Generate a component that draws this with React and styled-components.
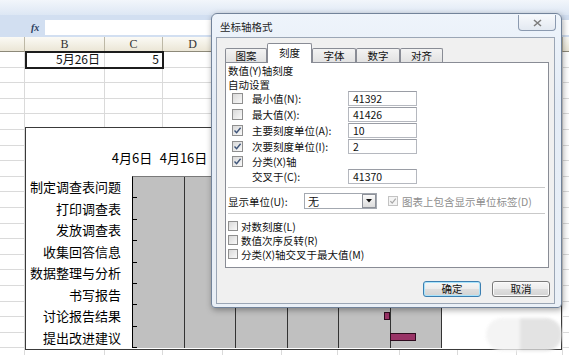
import React from 'react';
import styled, { createGlobalStyle } from 'styled-components';

const COLS = [25, 80, 58, 60, 59, 56, 62, 58, 59, 46, 30];
// letters right of D sit under the dialog
const HEAD = ['', 'B', 'C', 'D', '', '', '', '', '', '', ''];
const ROW_COUNT = 20;

const DAY = 5.15;
// only the first two axis labels are left of the dialog
const DATES = ['4月6日', '4月16日'];
const TASKS = [
  { name: '制定调查表问题', start: 22, days: 3 },
  { name: '打印调查表', start: 25, days: 2 },
  { name: '发放调查表', start: 27, days: 4 },
  { name: '收集回答信息', start: 31, days: 7 },
  { name: '数据整理与分析', start: 38, days: 6 },
  { name: '书写报告', start: 44, days: 5 },
  { name: '讨论报告结果', start: 49, days: 1 },
  { name: '提出改进建议', start: 50, days: 5 },
];

const SCALE_ROWS = [
  { label: '最小值(N):', check: 'off', value: '41392' },
  { label: '最大值(X):', check: 'off', value: '41426' },
  { label: '主要刻度单位(A):', check: 'on', value: '10' },
  { label: '次要刻度单位(I):', check: 'on', value: '2' },
  { label: '分类(X)轴', check: 'on', value: null },
  { label: '交叉于(C):', check: null, value: '41370' },
];

const OPTIONS = ['对数刻度(L)', '数值次序反转(R)', '分类(X)轴交叉于最大值(M)'];
const TABS = [
  { label: '图案', w: 42 },
  { label: '刻度', w: 45, active: true },
  { label: '字体', w: 44 },
  { label: '数字', w: 44 },
  { label: '对齐', w: 43 },
];

const GlobalStyle = createGlobalStyle`
  html, body { margin: 0; padding: 0; background: #fff; }
  body { font-family: "Noto Sans CJK SC", "Noto Sans", sans-serif; }
`;

const Screen = styled.div`
  position: relative;
  width: 569px;
  height: 355px;
  overflow: hidden;
  background: #fff;
  font-family: "Noto Sans CJK SC", "Noto Sans", sans-serif;
`;

const TopStrip = styled.div`
  height: 15px;
  background: linear-gradient(#f2f6fb, #dde7f4);
`;

const FormulaBar = styled.div`
  height: 22px;
  box-sizing: border-box;
  padding: 5px 0 2px 31px;
  display: flex;
  gap: 5px;
  background: #d2dff1;
`;

const Fx = styled.span`
  width: 9px;
  font-family: "Liberation Serif", serif;
  font-style: italic;
  font-weight: bold;
  font-size: 10px;
  line-height: 15px;
  color: #2b3d5e;
`;

const FormulaInput = styled.div`
  flex: 1;
  background: #fff;
`;

const Sheet = styled.div`
  display: grid;
  grid-template-columns: ${COLS.map((c) => c + 'px').join(' ')};
  grid-template-rows: 15px;
  grid-auto-rows: 15.6px;
`;

const HeadCell = styled.div`
  box-sizing: border-box;
  border-right: 1px solid #bdb8a6;
  border-bottom: 1px solid #8d8979;
  background: linear-gradient(#fbfaf5, #ebe6d6);
  font-family: "Liberation Serif", serif;
  font-size: 12px;
  line-height: 14px;
  text-align: center;
  color: #333;
`;

const Cell = styled.div`
  box-sizing: border-box;
  border-right: 1px solid #dadada;
  border-bottom: 1px solid #dadada;
  padding-right: ${(p) => p.$pad || 4}px;
  font-size: 12px;
  line-height: 14px;
  text-align: right;
  white-space: nowrap;
  color: #111;
`;

const Selection = styled.div`
  position: absolute;
  left: 25px;
  top: 51px;
  width: 139px;
  height: 18px;
  box-sizing: border-box;
  border: 2px solid #1c1c1c;
  pointer-events: none;
`;

/* chart object floating on the sheet */
const Chart = styled.div`
  position: absolute;
  left: 25px;
  top: 127px;
  width: 537px;
  height: 223px;
  box-sizing: border-box;
  border: 1px solid #3a3a3a;
  background: #fff;
  display: grid;
  grid-template-columns: 106px 310px 1fr;
  grid-template-rows: 22px 16px 10px 172px;
`;

const DateAxis = styled.div`
  grid-column: 2;
  grid-row: 2;
  position: relative;
`;

const DateLabel = styled.span`
  position: absolute;
  top: 0;
  transform: translateX(-50%);
  font-size: 13px;
  line-height: 16px;
  white-space: nowrap;
  color: #000;
`;

const CategoryAxis = styled.div`
  grid-column: 1;
  grid-row: 4;
  display: grid;
  grid-template-rows: repeat(8, 1fr);
`;

const Category = styled.div`
  padding-right: 11px;
  font-size: 13px;
  line-height: 21.5px;
  text-align: right;
  white-space: nowrap;
  color: #000;
`;

const Plot = styled.div`
  grid-column: 2;
  grid-row: 4;
  display: grid;
  box-sizing: border-box;
  border-left: 1px solid #000;
  border-top: 1px solid #7a7a7a;
  background: #c0c0c0;
`;

const GridLines = styled.div`
  grid-area: 1 / 1;
  display: flex;
`;

const GridCol = styled.div`
  flex: 1;
  border-right: 1px solid #333;
`;

const Bands = styled.div`
  grid-area: 1 / 1;
  display: grid;
  grid-template-rows: repeat(8, 1fr);
`;

const Band = styled.div`
  position: relative;
  display: flex;
  align-items: center;

  &::after {
    content: '';
    position: absolute;
    left: 0;
    bottom: 0;
    width: 4px;
    height: 1px;
    background: #000;
  }
`;

const Bar = styled.div`
  height: 8px;
  box-sizing: border-box;
  background: #993366;
  border: 1px solid #2e0b1e;
`;

const Watermark = styled.div`
  position: absolute;
  left: 486px;
  top: 318px;
  width: 76px;
  height: 33px;
  border-radius: 17px;
  background: linear-gradient(to right, #f3f3f3 0 45%, #e1e1e1 45% 100%);
  filter: blur(1.5px);
  opacity: 0.9;
`;

/* dialog window */
const Dialog = styled.div`
  position: absolute;
  left: 211px;
  top: 13px;
  width: 351px;
  height: 295px;
  box-sizing: border-box;
  border: 1px solid #72839a;
  border-radius: 6px 6px 4px 4px;
  background: linear-gradient(#eef4fb, #e4ecf6 30%, #eaf0f7);
  box-shadow: 1px 2px 6px rgba(0, 0, 0, 0.35);
  display: flex;
  flex-direction: column;
`;

const TitleBar = styled.div`
  height: 23px;
  display: flex;
  justify-content: space-between;
  align-items: flex-start;
  padding: 0 5px 0 8px;
`;

const Title = styled.div`
  font-size: 10.5px;
  line-height: 26px;
  color: #1e1e1e;
`;

const CloseButton = styled.div`
  width: 38px;
  height: 16px;
  margin-top: 1px;
  box-sizing: border-box;
  border: 1px solid #8b9ab0;
  border-top: none;
  border-radius: 0 0 4px 4px;
  background: linear-gradient(#f7f9fc, #e3e9f1);
  display: flex;
  align-items: center;
  justify-content: center;
`;

const Client = styled.div`
  flex: 1;
  margin: 0 6px 3px 4px;
  padding: 5px 4px 0 8px;
  border: 1px solid #9ba6b5;
  background: #f0f0f0;
  display: flex;
  flex-direction: column;
`;

const TabStrip = styled.div`
  height: 20px;
  margin-bottom: -1px;
  display: flex;
  align-items: flex-end;
  position: relative;
  z-index: 1;
`;

const Tab = styled.div`
  width: ${(p) => p.$w}px;
  height: ${(p) => (p.$active ? 20 : 14)}px;
  margin-bottom: ${(p) => (p.$active ? 0 : 1)}px;
  box-sizing: border-box;
  border: 1px solid #898c95;
  border-bottom: none;
  border-radius: 2px 2px 0 0;
  background: ${(p) => (p.$active ? '#fff' : 'linear-gradient(#f3f3f3, #e2e2e2)')};
  font-size: 10.5px;
  line-height: ${(p) => (p.$active ? 17 : 13)}px;
  text-align: center;
  color: #111;
`;

const Panel = styled.div`
  width: 324px;
  height: 206px;
  box-sizing: border-box;
  margin-right: 1px;
  padding: 1px 0 0 2px;
  border: 1px solid #898c95;
  background: #fff;
  font-size: 10.5px;
  line-height: 14px;
  color: #111;
`;

const Heading = styled.div`
  height: 14px;
`;

const ScaleGrid = styled.div`
  margin: -2px 0 0 4px;
  display: grid;
  grid-template-columns: 11px 87px 69px;
  grid-template-rows: 16px 16px 16px 16px 14px 16px;
  column-gap: 9px;
  align-items: center;
`;

const Label = styled.span`
  white-space: nowrap;
  line-height: 13px;
  color: ${(p) => (p.$muted ? '#8e8e8e' : '#111')};
`;

const Field = styled.div`
  height: 15px;
  box-sizing: border-box;
  padding-left: 4px;
  border: 1px solid #b5b8bf;
  border-top-color: #9a9da5;
  background: #fff;
  font-size: 10.5px;
  line-height: 13px;
`;

const Separator = styled.div`
  height: 1px;
  margin: ${(p) => p.$top}px 3px 0 0;
  background: #c9c9c9;
`;

const UnitRow = styled.div`
  height: 20px;
  margin-top: 3px;
  display: flex;
  align-items: center;
`;

const UnitLabel = styled.span`
  width: 76px;
  line-height: 13px;
  white-space: nowrap;
`;

const Select = styled.div`
  width: 73px;
  height: 16px;
  box-sizing: border-box;
  border: 1px solid #a3a8b0;
  background: #fff;
  display: flex;
  align-items: center;
  padding-left: 3px;
  margin-right: 11px;
  font-size: 11px;
  line-height: 13px;
`;

const DropButton = styled.div`
  width: 14px;
  height: 14px;
  margin-left: auto;
  box-sizing: border-box;
  border: 1px solid #8d9199;
  background: linear-gradient(#fafafa, #dcdcdc);
  display: flex;
  align-items: center;
  justify-content: center;
`;

const Option = styled.div`
  height: 14px;
  display: flex;
  align-items: center;
  gap: 3px;
`;

const OptionList = styled.div`
  margin-top: 5px;
`;

const Box = styled.span`
  width: ${(p) => p.$size}px;
  height: ${(p) => p.$size}px;
  box-sizing: border-box;
  flex: none;
  border: 1px solid ${(p) => (p.$disabled ? '#c3c3c3' : '#8f8f8f')};
  background: ${(p) => (p.$disabled ? '#f4f4f4' : 'linear-gradient(135deg, #d9d9d9, #f9f9f9)')};
  display: flex;
  align-items: center;
  justify-content: center;
`;

const Buttons = styled.div`
  margin-top: 13px;
  display: flex;
  justify-content: flex-end;
  gap: 11px;
`;

const Button = styled.div`
  width: 58px;
  height: 16px;
  box-sizing: border-box;
  border: 1px solid ${(p) => (p.$primary ? '#3c7fb1' : '#7a7a7a')};
  border-radius: 3px;
  background: linear-gradient(#f6f6f6, #ececec 50%, #dfdfdf 50%, #d3d3d3);
  box-shadow: ${(p) => (p.$primary ? 'inset 0 0 0 1px #a9e3fb' : 'inset 0 0 0 1px #fbfbfb')};
  font-size: 10.5px;
  line-height: 14px;
  text-align: center;
  color: #111;
`;

const Check = ({ on, size = 11, disabled }) => (
  <Box $size={size} $disabled={disabled}>
    {on && (
      <svg width={size - 2} height={size - 2} viewBox="0 0 9 9">
        <path d="M1.5 4.6 L3.6 6.8 L7.6 1.8" fill="none" stroke={disabled ? '#a9a9a9' : '#3e5479'} strokeWidth="1.4" />
      </svg>
    )}
  </Box>
);

function Spreadsheet() {
  return (
    <Sheet>
      {HEAD.map((h, i) => (
        <HeadCell key={'h' + i}>{h}</HeadCell>
      ))}
      {Array.from({ length: ROW_COUNT }).map((_, r) =>
        COLS.map((_, c) => {
          let text = '';
          if (r === 0 && c === 1) text = '5月26日';
          if (r === 0 && c === 2) text = '5';
          return (
            <Cell key={r + '-' + c} $pad={c === 2 ? 3 : 4}>
              {text}
            </Cell>
          );
        })
      )}
    </Sheet>
  );
}

function GanttChart() {
  return (
    <Chart>
      <DateAxis>
        {DATES.map((d, i) => (
          <DateLabel key={d} style={{ left: i * 51.5 }}>
            {d}
          </DateLabel>
        ))}
      </DateAxis>
      <CategoryAxis>
        {TASKS.map((t) => (
          <Category key={t.name}>{t.name}</Category>
        ))}
      </CategoryAxis>
      <Plot>
        <GridLines>
          {Array.from({ length: 6 }).map((_, i) => (
            <GridCol key={i} />
          ))}
        </GridLines>
        <Bands>
          {TASKS.map((t) => (
            <Band key={t.name}>
              <Bar style={{ marginLeft: t.start * DAY - 1, width: t.days * DAY + 1 }} />
            </Band>
          ))}
        </Bands>
      </Plot>
    </Chart>
  );
}

function AxisDialog() {
  return (
    <Dialog>
      <TitleBar>
        <Title>坐标轴格式</Title>
        <CloseButton>
          <svg width="9" height="8" viewBox="0 0 9 8">
            <path d="M1 1 L8 7 M8 1 L1 7" stroke="#7d7d7d" strokeWidth="1.6" fill="none" />
          </svg>
        </CloseButton>
      </TitleBar>
      <Client>
        <TabStrip>
          {TABS.map((t) => (
            <Tab key={t.label} $w={t.w} $active={t.active}>
              {t.label}
            </Tab>
          ))}
        </TabStrip>
        <Panel>
          <Heading>数值(Y)轴刻度</Heading>
          <Heading>自动设置</Heading>
          <ScaleGrid>
            {SCALE_ROWS.map((row) => (
              <React.Fragment key={row.label}>
                <span>{row.check && <Check on={row.check === 'on'} />}</span>
                <Label>{row.label}</Label>
                {row.value ? <Field>{row.value}</Field> : <span />}
              </React.Fragment>
            ))}
          </ScaleGrid>
          <Separator $top={3} />
          <UnitRow>
            <UnitLabel>显示单位(U):</UnitLabel>
            <Select>
              无
              <DropButton>
                <svg width="6" height="4" viewBox="0 0 6 4">
                  <path d="M0 0 H6 L3 3.5 Z" fill="#111" />
                </svg>
              </DropButton>
            </Select>
            <Check on disabled size={10} />
            <Label $muted style={{ marginLeft: 4 }}>
              图表上包含显示单位标签(D)
            </Label>
          </UnitRow>
          <Separator $top={2} />
          <OptionList>
            {OPTIONS.map((o) => (
              <Option key={o}>
                <Check size={10} />
                <Label>{o}</Label>
              </Option>
            ))}
          </OptionList>
        </Panel>
        <Buttons>
          <Button $primary>确定</Button>
          <Button>取消</Button>
        </Buttons>
      </Client>
    </Dialog>
  );
}

export default function App() {
  return (
    <>
      <GlobalStyle />
      <Screen>
        <TopStrip />
        <FormulaBar>
          <Fx>fx</Fx>
          <FormulaInput />
        </FormulaBar>
        <Spreadsheet />
        <Selection />
        <GanttChart />
        <Watermark />
        <AxisDialog />
      </Screen>
    </>
  );
}
